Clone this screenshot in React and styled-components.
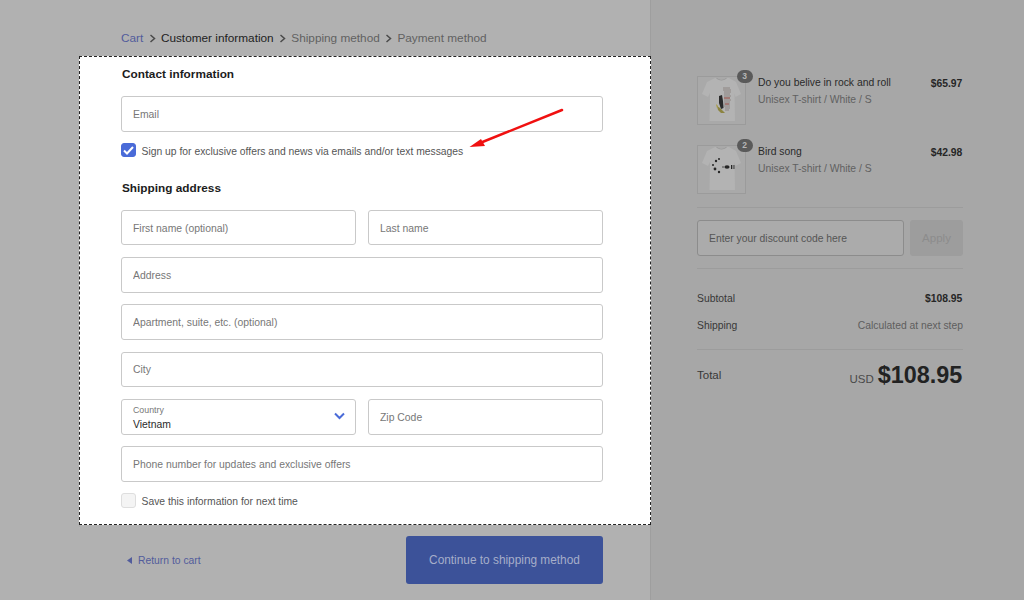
import React from 'react';
import styled, { createGlobalStyle } from 'styled-components';

const GlobalStyle = createGlobalStyle`
  html, body {
    margin: 0;
    padding: 0;
    height: 100%;
    overflow: hidden;
    background: #b1b1b1;
  }
  body {
    font-family: "Liberation Sans", Arial, sans-serif;
  }
`;

const Page = styled.div`
  display: flex;
  width: 1024px;
  height: 600px;
  overflow: hidden;
`;

const Main = styled.main`
  box-sizing: border-box;
  flex: none;
  width: 651px;
  height: 600px;
  padding: 30px 47px 0 121px;
  background: #b1b1b1;
  border-right: 1px solid #9e9e9e;
`;

const Crumbs = styled.nav`
  display: flex;
  align-items: center;
  height: 16px;
  font-size: 11.8px;
  color: #5f5f5f;
`;

const Crumb = styled.span`
  color: ${(p) => (p.$state === 'link' ? '#525c9c' : p.$state === 'active' ? '#222222' : '#616161')};
`;

const CrumbSep = styled.svg`
  width: 7px;
  height: 9px;
  margin: 1px 5px 0 5.6px;
  fill: none;
  stroke: #4a4a4a;
  stroke-width: 1.5;
`;

const Panel = styled.section`
  position: relative;
  box-sizing: border-box;
  height: 469px;
  margin: 10px -48px 0 -42px;
  padding: 9px 47px 0 41px;
  background: #ffffff;
  border: 1px dashed #222222;
`;

const Heading = styled.h2`
  margin: ${(p) => p.$top || 0}px 0 14px 1px;
  font-size: 11.8px;
  line-height: 16px;
  font-weight: 700;
  color: #1c1c1c;
`;

const Fields = styled.div`
  display: flex;
  flex-direction: column;
  gap: 11.6px;
`;

const Row = styled.div`
  display: flex;
  gap: 12px;
`;

const Input = styled.input`
  box-sizing: border-box;
  min-width: 0;
  width: 100%;
  height: 35.7px;
  padding: 1px 11px 0;
  font-family: inherit;
  font-size: 10.4px;
  color: #333333;
  background: #ffffff;
  border: 1px solid #c9c9c9;
  border-radius: 3px;
  outline: none;

  &::placeholder {
    color: #777777;
    opacity: 1;
  }
`;

const SelectBox = styled.div`
  position: relative;
  box-sizing: border-box;
  width: 100%;
  height: 35.7px;
  padding: 4px 11px 0;
  border: 1px solid #c9c9c9;
  border-radius: 3px;
`;

const SelectLabel = styled.div`
  font-size: 8.8px;
  line-height: 12px;
  color: #777777;
`;

const SelectValue = styled.div`
  margin-top: 2px;
  font-size: 10.4px;
  line-height: 14px;
  color: #2b2b2b;
`;

const Chevron = styled.svg`
  position: absolute;
  top: 12px;
  right: 10px;
  width: 11px;
  height: 8px;
  fill: none;
  stroke: #4a6bd8;
  stroke-width: 2;
`;

const CheckRow = styled.label`
  display: flex;
  align-items: center;
  gap: 6px;
  height: 15px;
  margin-top: 11px;
  font-size: 10.35px;
  color: #555555;
`;

const CheckText = styled.span`
  padding-top: 2px;
`;

const CheckBox = styled.span`
  display: flex;
  align-items: center;
  justify-content: center;
  box-sizing: border-box;
  width: 14.5px;
  height: 14.5px;
  border-radius: 3px;
  background: ${(p) => (p.$checked ? '#4a6bd8' : '#f4f4f4')};
  border: 1px solid ${(p) => (p.$checked ? '#4a6bd8' : '#dedede')};
`;

const Arrow = styled.svg`
  position: absolute;
  left: 385px;
  top: 48px;
  width: 105px;
  height: 50px;
`;

const Footer = styled.div`
  display: flex;
  align-items: center;
  justify-content: space-between;
  margin-top: 11px;
`;

const BackLink = styled.a`
  display: flex;
  align-items: center;
  gap: 6px;
  margin-left: 6px;
  font-size: 10.35px;
  color: #525c9c;
`;

const BackIcon = styled.svg`
  width: 5px;
  height: 7px;
  fill: #525c9c;
`;

const Continue = styled.button`
  width: 197px;
  height: 48px;
  font-family: inherit;
  font-size: 11.85px;
  color: #a6aec9;
  background: #3c5299;
  border: none;
  border-radius: 3px;
`;

const Side = styled.aside`
  box-sizing: border-box;
  flex: 1;
  height: 600px;
  padding: 76px 61px 0 46px;
  background: #a7a7a7;
`;

const Items = styled.div`
  display: flex;
  flex-direction: column;
  gap: 20px;
  padding-bottom: 13px;
`;

const Item = styled.div`
  display: flex;
  height: 49px;
`;

const Thumb = styled.div`
  position: relative;
  box-sizing: border-box;
  flex: none;
  width: 49px;
  height: 49px;
  background: #a9a9a9;
  border: 1px solid #9b9b9b;
`;

const ShirtSvg = styled.svg`
  display: block;
  width: 47px;
  height: 47px;
  filter: blur(0.4px);
`;

const Count = styled.span`
  position: absolute;
  top: -7.5px;
  right: -7.5px;
  width: 16px;
  height: 13px;
  border-radius: 7px;
  background: #5a5a5a;
  color: #b5b5b5;
  font-size: 8.5px;
  font-weight: 700;
  line-height: 13px;
  text-align: center;
`;

const ItemInfo = styled.div`
  flex: 1;
  margin-left: 12px;
`;

const ItemName = styled.div`
  font-size: 10.35px;
  line-height: 14px;
  color: #2a2a2a;
`;

const ItemVariant = styled.div`
  font-size: 10.35px;
  line-height: 14px;
  margin-top: 3px;
  color: #616161;
`;

const ItemPrice = styled.div`
  margin-top: 1px;
  padding-right: 0.7px;
  font-size: 10.35px;
  font-weight: 700;
  line-height: 14px;
  color: #262626;
`;

const Rule = styled.hr`
  height: 1px;
  margin: 0;
  border: none;
  background: #9c9c9c;
`;

const Discount = styled.div`
  display: flex;
  gap: 6px;
  margin: 12px 0;
`;

const DiscountInput = styled.input`
  box-sizing: border-box;
  width: 207px;
  height: 35.5px;
  padding: 1px 11px 0;
  font-family: inherit;
  font-size: 10.35px;
  background: #ababab;
  border: 1px solid #8c8c8c;
  border-radius: 3px;
  outline: none;

  &::placeholder {
    color: #555555;
    opacity: 1;
  }
`;

const Apply = styled.button`
  flex: 1;
  height: 35.5px;
  padding: 1px 0 0;
  font-family: inherit;
  font-size: 11.5px;
  color: #8c8c8c;
  background: #9d9d9d;
  border: none;
  border-radius: 3px;
`;

const Totals = styled.div`
  display: flex;
  flex-direction: column;
  gap: 13px;
  padding: 23px 0 16px;
`;

const TotalRow = styled.div`
  display: flex;
  justify-content: space-between;
  align-items: center;
  height: 14px;
  font-size: 10.35px;
  color: #383838;
`;

const Strong = styled.span`
  padding-right: 0.7px;
  font-weight: 700;
  color: #262626;
`;

const Muted = styled.span`
  color: #5e5e5e;
`;

const Grand = styled.div`
  display: flex;
  justify-content: space-between;
  align-items: center;
  height: 26px;
  margin-top: 12.5px;
  font-size: 11.5px;
  color: #383838;
`;

const GrandValue = styled.div`
  display: flex;
  align-items: baseline;
  gap: 4px;
  padding-right: 0.7px;
`;

const Currency = styled.span`
  font-size: 11.5px;
  color: #4a4a4a;
`;

const GrandPrice = styled.span`
  font-size: 23.4px;
  font-weight: 700;
  color: #222222;
`;

const Shirt = ({ children }) => (
  <ShirtSvg viewBox="0 0 47 47">
    <path
      d="M17 1 L19 1 Q23.5 4 28 1 L31 1 L38 5 L43 17 L37.5 20 L36.5 16 L37 44 L11.5 44 L12 16 L10 20 L4 17 L9 5 Z"
      fill="#b3b3b3"
    />
    <path d="M18.5 0.8 Q23.5 4.5 28.5 0.8 L28.5 1.8 Q23.5 5 18.5 1.8 Z" fill="#969696" />
    {children}
  </ShirtSvg>
);

const RockArt = () => (
  <g>
    <path d="M25 11 H32 M25 13 H33 M26 15 H33 M26 17 H32 M26 19 H33 M26 21 H32 M26 23 H33 M26 25 H32 M26 27 H32 M26 29 H32 M27 31 H32 M27 33 H31" stroke="#8d8582" strokeWidth="1" />
    <path d="M26 21 H32 M27 27 H31" stroke="#a2574f" strokeWidth="1" />
    <path d="M21 19 L24 18 L25 24 L25.5 31 L23 32 L21 26 Z" fill="#2b2b2b" />
    <path d="M19 29 L22 31 L27 36 L23 36 L20 33 Z" fill="#8c8440" />
    <path d="M18 27 L20 29 L19 31 Z" fill="#a79a36" />
  </g>
);

const BirdArt = () => (
  <g fill="#262626">
    <circle cx="21" cy="13" r="1" />
    <circle cx="18" cy="15" r="1.2" />
    <circle cx="15" cy="19" r="1" />
    <circle cx="17" cy="23" r="1.4" />
    <circle cx="21" cy="26" r="1.2" />
    <circle cx="25" cy="21" r="0.7" />
    <ellipse cx="29" cy="21" rx="2.6" ry="1.8" />
    <rect x="33" y="19" width="1.3" height="4" />
    <rect x="35.5" y="19" width="0.9" height="4" />
  </g>
);

const items = [
  { name: 'Do you belive in rock and roll', price: '$65.97', count: 3, art: <RockArt /> },
  { name: 'Bird song', price: '$42.98', count: 2, art: <BirdArt /> },
];

const Sep = () => (
  <CrumbSep viewBox="0 0 7 9"><path d="M1.5 1 L5.5 4.5 L1.5 8" /></CrumbSep>
);

const App = () => (
  <>
    <GlobalStyle />
    <Page>
      <Main>
        <Crumbs>
          <Crumb $state="link">Cart</Crumb>
          <Sep />
          <Crumb $state="active">Customer information</Crumb>
          <Sep />
          <Crumb>Shipping method</Crumb>
          <Sep />
          <Crumb>Payment method</Crumb>
        </Crumbs>

        <Panel>
          <Heading>Contact information</Heading>
          <Fields>
            <Input placeholder="Email" />
          </Fields>
          <CheckRow>
            <CheckBox $checked>
              <svg width="11" height="9" viewBox="0 0 11 9" fill="none" stroke="#ffffff" strokeWidth="2">
                <path d="M1 4.5 L4 7.5 L10 1" />
              </svg>
            </CheckBox>
            <CheckText>Sign up for exclusive offers and news via emails and/or text messages</CheckText>
          </CheckRow>

          <Heading $top={22}>Shipping address</Heading>
          <Fields>
            <Row>
              <Input placeholder="First name (optional)" />
              <Input placeholder="Last name" />
            </Row>
            <Input placeholder="Address" />
            <Input placeholder="Apartment, suite, etc. (optional)" />
            <Input placeholder="City" />
            <Row>
              <SelectBox>
                <SelectLabel>Country</SelectLabel>
                <SelectValue>Vietnam</SelectValue>
                <Chevron viewBox="0 0 11 8"><path d="M1 1.5 L5.5 6 L10 1.5" /></Chevron>
              </SelectBox>
              <Input placeholder="Zip Code" />
            </Row>
            <Input placeholder="Phone number for updates and exclusive offers" />
          </Fields>
          <CheckRow>
            <CheckBox />
            <CheckText>Save this information for next time</CheckText>
          </CheckRow>

          <Arrow viewBox="0 0 105 50">
            <path d="M97 5 L15 38" stroke="#f01010" strokeWidth="2.5" strokeLinecap="round" />
            <path d="M4.5 42 L16 34 L20 41 Z" fill="#f01010" />
          </Arrow>
        </Panel>

        <Footer>
          <BackLink>
            <BackIcon viewBox="0 0 5 7"><path d="M5 0 L0 3.5 L5 7 Z" /></BackIcon>
            Return to cart
          </BackLink>
          <Continue>Continue to shipping method</Continue>
        </Footer>
      </Main>

      <Side>
        <Items>
          {items.map((item) => (
            <Item key={item.name}>
              <Thumb>
                <Shirt>{item.art}</Shirt>
                <Count>{item.count}</Count>
              </Thumb>
              <ItemInfo>
                <ItemName>{item.name}</ItemName>
                <ItemVariant>Unisex T-shirt / White / S</ItemVariant>
              </ItemInfo>
              <ItemPrice>{item.price}</ItemPrice>
            </Item>
          ))}
        </Items>
        <Rule />
        <Discount>
          <DiscountInput placeholder="Enter your discount code here" />
          <Apply>Apply</Apply>
        </Discount>
        <Rule />
        <Totals>
          <TotalRow>
            <span>Subtotal</span>
            <Strong>$108.95</Strong>
          </TotalRow>
          <TotalRow>
            <span>Shipping</span>
            <Muted>Calculated at next step</Muted>
          </TotalRow>
        </Totals>
        <Rule />
        <Grand>
          <span>Total</span>
          <GrandValue>
            <Currency>USD</Currency>
            <GrandPrice>$108.95</GrandPrice>
          </GrandValue>
        </Grand>
      </Side>
    </Page>
  </>
);

export default App;
